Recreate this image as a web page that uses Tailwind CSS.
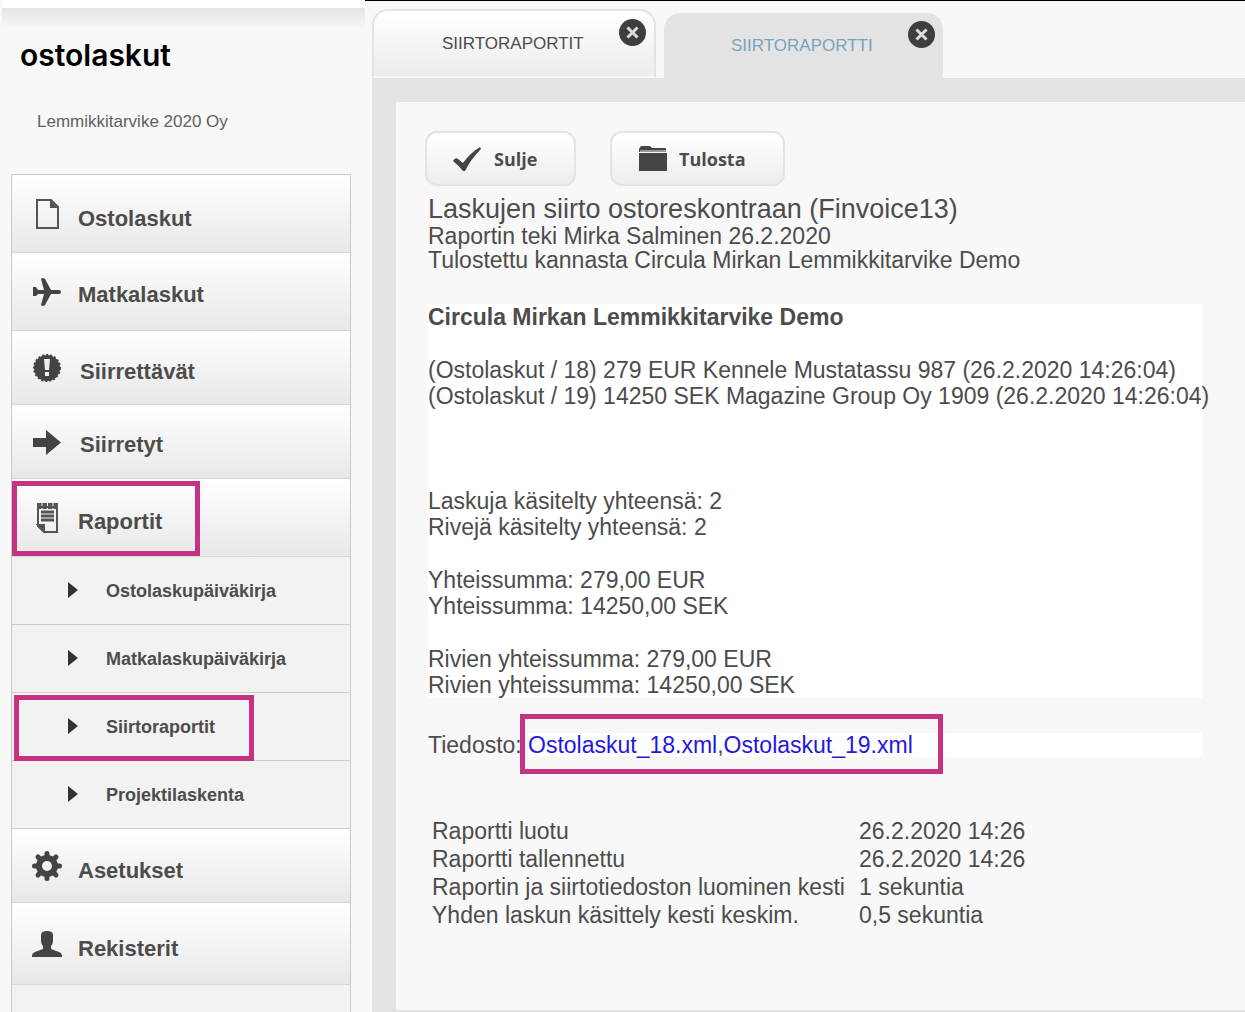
<!DOCTYPE html>
<html lang="fi">
<head>
  <meta charset="UTF-8" />
  <title>Ostolaskut - Siirtoraportti</title>
  <meta name="viewport" content="width=device-width, initial-scale=1.0" />
  <script src="https://cdn.jsdelivr.net/npm/@tailwindcss/browser@4"></script>
</head>
<body class="bg-[#f8f8f8] min-h-screen flex overflow-x-hidden font-['Liberation_Sans',Arial,sans-serif] text-[#4c4c4c]">

  <!-- Sivupalkki -->
  <aside class="w-[365px] shrink-0 flex flex-col">
    <div class="h-2 ml-[2px] bg-white"></div>
    <div class="h-5 ml-[2px] bg-linear-to-b from-[#e3e3e3] to-[#f8f8f8]"></div>
    <div class="pl-5 h-[52px] leading-[54px] text-[30px] font-semibold text-black font-['Inter',sans-serif]">ostolaskut</div>
    <div class="pl-[37px] pt-[30px] h-[94px] text-[17px] leading-6 text-[#606060]">Lemmikkitarvike 2020 Oy</div>

    <nav class="ml-[11px] mr-[14px] flex-1 border border-b-0 border-[#c8c8c8] bg-[#f2f2f2] text-[22px] font-bold">
      <a href="#" class="flex items-center h-[78px] border-b border-[#d6d6d6] bg-linear-to-b from-white to-[#e8e8e8]">
        <svg class="w-[34px] h-[34px] ml-[18px]" viewBox="0 0 34 34" fill="none" stroke="#555" stroke-width="2"><path d="M7 3h14l7 7v21H7z" /><path d="M20 3v8h8z" fill="#555" stroke="none" /></svg>
        <span class="ml-[14px] pt-[10px]">Ostolaskut</span>
      </a>
      <a href="#" class="flex items-center h-[78px] border-b border-[#d6d6d6] bg-linear-to-b from-white to-[#e8e8e8]">
        <svg class="w-[34px] h-[34px] ml-[18px]" viewBox="0 0 34 34" fill="#444"><path d="M11 4q2-2 4 0l6 11h8q2 0 2 2t-2 2h-8l-6 11q-2 2-4 0l3-11H8l-2 2H3v-9h3l2 3h6z" /></svg>
        <span class="ml-[14px] pt-[6px]">Matkalaskut</span>
      </a>
      <a href="#" class="flex items-center h-[74px] border-b border-[#d6d6d6] bg-linear-to-b from-white to-[#e8e8e8]">
        <svg class="w-[34px] h-[34px] ml-[18px]" viewBox="0 0 34 34"><circle cx="17" cy="17" r="13" fill="#444" /><circle cx="17" cy="17" r="13" fill="none" stroke="#444" stroke-width="2" stroke-dasharray="2 2" /><path d="M14 8h6l-1 11h-4z" fill="#eee" /><rect x="15" y="21" width="4" height="4" fill="#eee" /></svg>
        <span class="ml-4 pt-2">Siirrettävät</span>
      </a>
      <a href="#" class="flex items-center h-[74px] border-b border-[#d6d6d6] bg-linear-to-b from-white to-[#e8e8e8]">
        <svg class="w-[34px] h-[34px] ml-[18px]" viewBox="0 0 34 34" fill="#444"><path d="M3 13h13V5l15 12.500L16 30v-8H3z" /></svg>
        <span class="ml-4 pt-[6px]">Siirretyt</span>
      </a>
      <a href="#" class="relative flex items-center h-[78px] border-b border-[#d6d6d6] bg-linear-to-b from-white to-[#e8e8e8]">
        <svg class="w-[34px] h-[34px] ml-[18px]" viewBox="0 0 34 34" fill="none" stroke="#555" stroke-width="2"><path d="M8 6h19v25H14l-6-6z" /><path d="M8 24h6v6z" fill="#444" /><path d="M7 5h21" stroke-width="6" stroke-dasharray="4.500 1" /><path d="M11 11h13M11 15h13M11 19h13" stroke-width="3" /></svg>
        <span class="ml-[14px] pt-2">Raportit</span>
        <span class="absolute left-0 top-[2px] w-[188px] h-[75px] border-[5px] border-[#c73384]"></span>
      </a>
      <div class="text-[18px]">
        <a href="#" class="flex items-center h-[68px] border-b border-[#cccccc]">
          <svg class="w-[10px] h-4 ml-14 mb-[2px]" viewBox="0 0 10 16" fill="#333"><path d="M0 0l10 8-10 8z" /></svg>
          <span class="ml-7 pt-[2px]">Ostolaskupäiväkirja</span>
        </a>
        <a href="#" class="flex items-center h-[68px] border-b border-[#cccccc]">
          <svg class="w-[10px] h-4 ml-14 mb-[2px]" viewBox="0 0 10 16" fill="#333"><path d="M0 0l10 8-10 8z" /></svg>
          <span class="ml-7 pt-[2px]">Matkalaskupäiväkirja</span>
        </a>
        <a href="#" class="relative flex items-center h-[68px] border-b border-[#cccccc]">
          <svg class="w-[10px] h-4 ml-14 mb-[2px]" viewBox="0 0 10 16" fill="#333"><path d="M0 0l10 8-10 8z" /></svg>
          <span class="ml-7 pt-[2px]">Siirtoraportit</span>
          <span class="absolute left-[2px] top-[2px] w-[240px] h-[66px] border-[5px] border-[#c73384]"></span>
        </a>
        <a href="#" class="flex items-center h-[68px] border-b border-[#cccccc]">
          <svg class="w-[10px] h-4 ml-14 mb-[2px]" viewBox="0 0 10 16" fill="#333"><path d="M0 0l10 8-10 8z" /></svg>
          <span class="ml-7 pt-[2px]">Projektilaskenta</span>
        </a>
      </div>
      <a href="#" class="flex items-center h-[74px] border-b border-[#d6d6d6] bg-linear-to-b from-white to-[#e8e8e8]">
        <svg class="w-[34px] h-[34px] ml-[18px]" viewBox="0 0 34 34"><path d="M17 4.500v25M4.500 17h25M8 8l18 18M26 8L8 26" stroke="#444" stroke-width="5" stroke-linecap="round" /><circle cx="17" cy="17" r="11" fill="#444" /><circle cx="17" cy="17" r="5" fill="#f2f2f2" /></svg>
        <span class="ml-[14px] pt-[10px]">Asetukset</span>
      </a>
      <a href="#" class="flex items-center h-[82px] border-b border-[#d6d6d6] bg-linear-to-b from-white to-[#e8e8e8]">
        <svg class="w-[34px] h-[34px] ml-[18px]" viewBox="0 0 34 34" fill="#444"><path d="M17 4q6 0 6 4v6q0 3-2 5v3l8 3q3 1 3 4v1H2v-1q0-3 3-4l8-3v-3q-2-2-2-5V8q0-4 6-4z" /></svg>
        <span class="ml-[14px] pt-[10px]">Rekisterit</span>
      </a>
    </nav>
  </aside>

  <!-- Sisältö -->
  <main class="flex-1 min-w-0 flex flex-col border-t border-black pl-[7px]">
    <div class="flex items-end gap-2 h-[77px]">
      <div class="relative w-[284px] h-[69px] rounded-t-2xl border-2 border-[#e3e3e3] border-b-[#f8f8f8] bg-linear-to-b from-white to-[#ececec]">
        <a href="#" class="block pl-[68px] leading-[66px] text-[17px]">SIIRTORAPORTIT</a>
        <button type="button" aria-label="Sulje välilehti" class="absolute right-2 top-2">
          <svg class="w-[27px] h-[27px]" viewBox="0 0 27 27"><circle cx="13.500" cy="13.500" r="13.500" fill="#3e3e3e" /><path d="M8.500 8.500l10 10M18.500 8.500l-10 10" stroke="#ddd" stroke-width="3" /></svg>
        </button>
      </div>
      <div class="relative w-[279px] h-[65px] rounded-t-2xl bg-[#e3e3e3]">
        <a href="#" class="block pl-[67px] leading-[66px] text-[17px] text-[#79a3be]">SIIRTORAPORTTI</a>
        <button type="button" aria-label="Sulje välilehti" class="absolute right-2 top-2">
          <svg class="w-[27px] h-[27px]" viewBox="0 0 27 27"><circle cx="13.500" cy="13.500" r="13.500" fill="#3e3e3e" /><path d="M8.500 8.500l10 10M18.500 8.500l-10 10" stroke="#ddd" stroke-width="3" /></svg>
        </button>
      </div>
    </div>

    <section class="flex-1 border-l-24 border-t-24 border-b-2 border-[#e3e3e3] pt-[29px] pl-8 text-[23px] leading-[26px] whitespace-nowrap">
      <div class="flex gap-[34px] -ml-[3px]">
        <button type="button" class="flex items-center w-[151px] h-[55px] pl-[26px] gap-3 rounded-xl border-2 border-[#e3e3e3] bg-linear-to-b from-white to-[#ededed] font-['Open_Sans',sans-serif] text-[18px] font-bold">
          <svg class="w-[29px] h-[29px]" viewBox="0 0 29 29" fill="#444"><path d="M0 17q2-4 5-2l5 4Q17 9 27 3l1 2Q18 15 12 27h-2Q6 22 0 17z" /></svg>
          Sulje
        </button>
        <button type="button" class="flex items-center w-[175px] h-[55px] pl-[26px] gap-3 rounded-xl border-2 border-[#e3e3e3] bg-linear-to-b from-white to-[#ededed] font-['Open_Sans',sans-serif] text-[18px] font-bold">
          <svg class="w-[29px] h-[29px]" viewBox="0 0 29 29" fill="#444"><path d="M1 27V9h28v18z" /><path d="M1 8V5l2-3h9l2 2h14v4z" /><path d="M2 7h26" stroke="#999" stroke-width="2" /></svg>
          Tulosta
        </button>
      </div>

      <h1 class="mt-2 text-[27px] leading-[30px]">Laskujen siirto ostoreskontraan (Finvoice13)</h1>
      <p class="leading-6">Raportin teki Mirka Salminen 26.2.2020</p>
      <p class="leading-6">Tulostettu kannasta Circula Mirkan Lemmikkitarvike Demo</p>

      <div class="mt-8 w-[774px] bg-white">
        <h2 class="font-bold">Circula Mirkan Lemmikkitarvike Demo</h2>
        <p class="mt-[27px]">(Ostolaskut / 18) 279 EUR Kennele Mustatassu 987 (26.2.2020 14:26:04)<br />(Ostolaskut / 19) 14250 SEK Magazine Group Oy 1909 (26.2.2020 14:26:04)</p>
        <p class="mt-[79px]">Laskuja käsitelty yhteensä: 2<br />Rivejä käsitelty yhteensä: 2</p>
        <p class="mt-[27px]">Yhteissumma: 279,00 EUR<br />Yhteissumma: 14250,00 SEK</p>
        <p class="mt-[27px]">Rivien yhteissumma: 279,00 EUR<br />Rivien yhteissumma: 14250,00 SEK</p>
      </div>

      <div class="relative mt-[35px] w-[774px] flex leading-6">
        <span class="w-[100px]">Tiedosto:</span>
        <span class="flex-1 bg-white"><a href="#" class="text-[#2418e0]">Ostolaskut_18.xml</a>,<a href="#" class="text-[#2418e0]">Ostolaskut_19.xml</a></span>
        <span class="absolute left-[92px] -top-[19px] w-[423px] h-[60px] border-[5px] border-[#c73384]"></span>
      </div>

      <table class="mt-[60px] ml-1 leading-7">
        <tbody>
          <tr><td class="w-[427px]">Raportti luotu</td><td>26.2.2020 14:26</td></tr>
          <tr><td>Raportti tallennettu</td><td>26.2.2020 14:26</td></tr>
          <tr><td>Raportin ja siirtotiedoston luominen kesti</td><td>1 sekuntia</td></tr>
          <tr><td>Yhden laskun käsittely kesti keskim.</td><td>0,5 sekuntia</td></tr>
        </tbody>
      </table>
    </section>
  </main>

</body>
</html>
